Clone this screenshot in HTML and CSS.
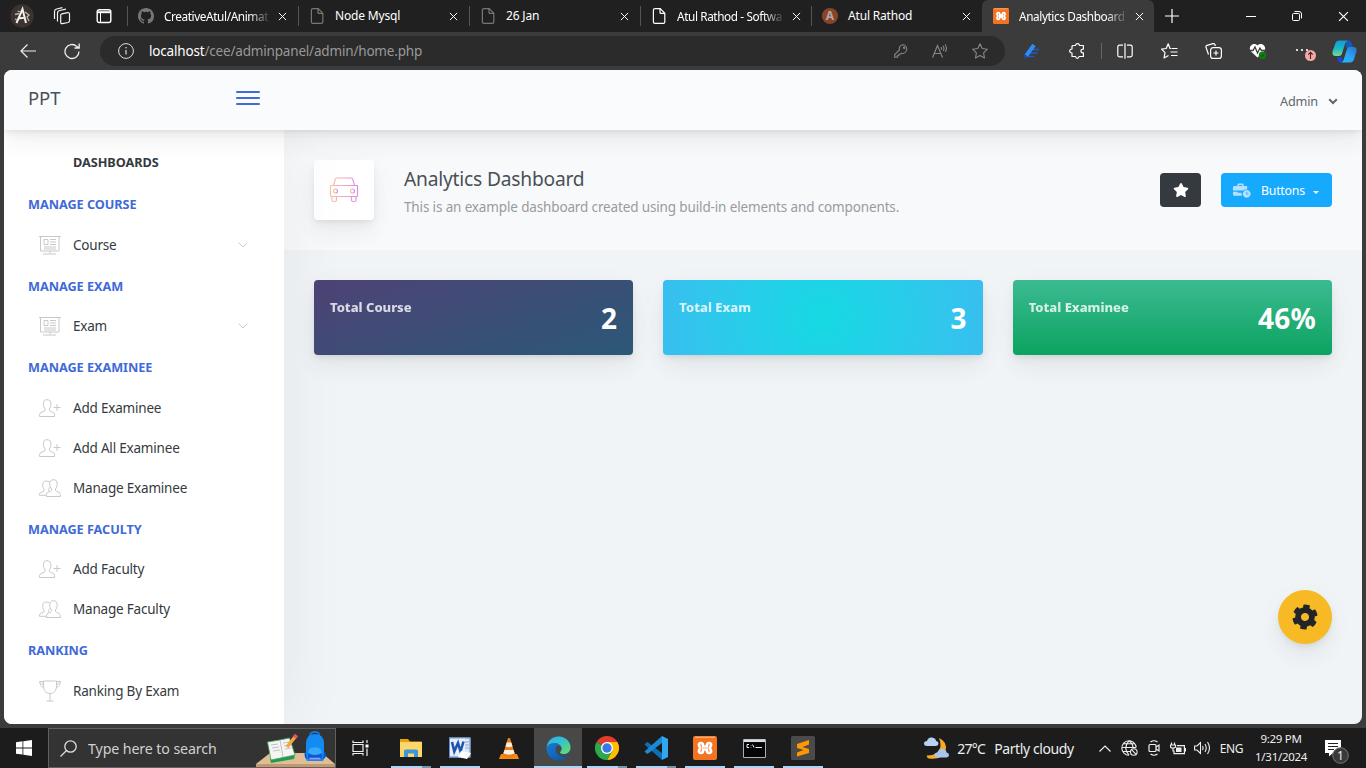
FILE: index.html
```
<!DOCTYPE html>
<html lang="en">
<head>
<meta charset="utf-8">
<title>Analytics Dashboard</title>
<link rel="stylesheet" href="styles.css">
</head>
<body>
<svg class="defs" width="0" height="0" aria-hidden="true">
  <defs>
    <linearGradient id="car-g" x1="0" x2="1" y1="0" y2="0"><stop offset="0" stop-color="#fbc2a5"/><stop offset=".55" stop-color="#f0a3c0"/><stop offset="1" stop-color="#d98bee"/></linearGradient>
    <linearGradient id="edge-a" x1="0" x2="1" y1="0" y2="1"><stop offset="0" stop-color="#2fb2dc"/><stop offset=".45" stop-color="#35c1cf"/><stop offset="1" stop-color="#6ce05a"/></linearGradient>
    <linearGradient id="edge-b" x1="0" x2="1" y1="0" y2="1"><stop offset="0" stop-color="#1b82dc"/><stop offset="1" stop-color="#0b4f9c"/></linearGradient>
    <linearGradient id="cop-a" x1="0" x2="0" y1="0" y2="1"><stop offset="0" stop-color="#129bd5"/><stop offset=".5" stop-color="#1bb6c4"/><stop offset="1" stop-color="#79dc8d"/></linearGradient>
    <linearGradient id="cop-b" x1="1" x2="0" y1="0" y2="1"><stop offset="0" stop-color="#2870cf"/><stop offset=".5" stop-color="#2da0f3"/><stop offset="1" stop-color="#16c5ef"/></linearGradient>
  </defs>
  <symbol id="i-close" viewBox="0 0 10 10"><path d="M1 1l8 8M9 1L1 9" fill="none" stroke="currentColor" stroke-width="1.1"/></symbol>
  <symbol id="i-file" viewBox="0 0 14 16"><path d="M3 .6h5.2l4.6 4.6V14q0 1.4-1.4 1.4H3Q1.4 15.400 1.400 14V2Q1.400.6 3 .6zM8 .8v3.600q0 1 1 1h3.700" fill="none" stroke="currentColor" stroke-width="1.200"/></symbol>
  <symbol id="i-board" viewBox="0 0 22 20"><path d="M0 1.500h22M1.500 1.500v14.500h18.500V1.500M11 16v2.500M4 19h13M5 4.500h4v5H5zM11 4.500h6M11 7h6M11 9.500h6M5 12h12M5 14h12" fill="none" stroke="currentColor"/></symbol>
  <symbol id="i-add" viewBox="0 0 22 18"><path d="M8 .7C5.500.7 4.400 2.200 4.400 5c0 2.200.8 3.900 1.700 4.800v1.700C5.500 13 .6 12.700.6 15.500v2h15v-2c0-2.800-4.600-2.500-5.200-4V9.800c.9-.9 1.500-2.600 1.500-4.800 0-2.800-1.400-4.300-3.900-4.300zM18 5v7M14.500 8.500H21.500" fill="none" stroke="currentColor"/></symbol>
  <symbol id="i-group" viewBox="0 0 22 18"><path d="M14.500.7c-2.500 0-3.800 1.500-3.800 4.300 0 2.200.8 3.900 1.700 4.800v1.700c-.6 1.500-5 1.200-5 4v2h14v-2c0-2.800-4.300-2.500-4.900-4V9.800c.9-.9 1.700-2.600 1.700-4.800 0-2.800-1.200-4.300-3.700-4.300zM10.500 3C9.700 2.500 8.500 2 7.200 2 4.700 2 3.700 3.500 3.700 6.200c0 2.200.6 3.200 1.400 4v1.600c-.7 1.300-4.600 1-4.600 3.300v1.200h6.500M10.500 8.500c-.3.900-.7 1.300-1 1.700v1.500l1.300.9" fill="none" stroke="currentColor"/></symbol>
  <symbol id="i-cup" viewBox="0 0 22 22"><path d="M4.500 1h13v4.500c0 5-2.500 8-6.500 8s-6.500-3-6.500-8zM4.500 1.500H.6c.3 3.500 2 5.200 4.200 6.300M17.500 1.500h3.900c-.3 3.500-2 5.200-4.200 6.300M2 2.500l2.500 3M20 2.500l-2.500 3M11 13.500V21M7.500 21h7" fill="none" stroke="currentColor"/></symbol>
  <symbol id="i-chev" viewBox="0 0 10 6"><path d="M.6.6L5 5 9.400.6" fill="none" stroke="currentColor"/></symbol>
  <symbol id="i-xampp" viewBox="0 0 24 24"><rect width="24" height="24" rx="2" fill="#f37321"/><path d="M2 1.300h20" stroke="#ffc08f"/><path d="M8 7c-1.800 0-2.400 1.300-1.900 2.600.4.900.9 1.400.9 2.400s-.5 1.500-.9 2.400C5.600 15.700 6.200 17 8 17c1.700 0 2-1 2-2.200V13.500h4v1.300c0 1.200.3 2.200 2 2.200 1.800 0 2.400-1.300 1.900-2.600-.4-.9-.9-1.400-.9-2.400s.5-1.500.9-2.400C18.400 8.300 17.800 7 16 7c-1.700 0-2 1-2 2.200v1.300h-4V9.200C10 8 9.700 7 8 7z" fill="none" stroke="#fff" stroke-width="2.700"/></symbol>
</svg>

<div class="tabstrip">
  <div class="lead">
    <svg class="avatar" width="24" height="24" viewBox="0 0 24 24"><circle cx="12" cy="12" r="11.700" fill="#3b3330"/><path d="M6.500 19L12.500 5l3.500 14M8.500 14.500l7-1" fill="none" stroke="#f2f0ea" stroke-width="2"/><path d="M5 10.500l4-1M15 8l4 3-2 2 2 4M7.500 7l3 1M5 15l2 1" fill="none" stroke="#bdb8b0" stroke-width="1.300"/></svg>
    <svg width="18" height="18" viewBox="0 0 18 18" fill="none" stroke="#f2f2f2" stroke-width="1.200"><path d="M8.800 6.800l6-1.200q1.700-.2 1.700 1.400v6.800q0 1.300-1.400 1.700l-5.600 1.200q-1.800.2-1.800-1.500V8.300q0-1.200 1.100-1.500z"/><path d="M4.500 14.500V6q0-2 2-2.500l6.500-1.300M1.500 12V4.500q0-2 2-2.500l6-1.300"/></svg>
    <svg width="16" height="16" viewBox="0 0 16 16"><rect x="1.200" y="1.700" width="13.600" height="12.800" rx="2" fill="none" stroke="#fff" stroke-width="1.400"/><path d="M1 4.200h14" stroke="#fff" stroke-width="2"/><path d="M4.500 5v9.500" stroke="#fff"/></svg>
  </div>
  <div class="tab"><svg class="fav" width="16" height="16" viewBox="0 0 16 16" fill="#777"><path d="M8 0C3.580 0 0 3.580 0 8c0 3.540 2.290 6.530 5.470 7.590.4.070.55-.17.55-.38v-1.490c-2.010.37-2.530-.49-2.690-.94-.09-.23-.48-.94-.82-1.130-.28-.15-.68-.52-.01-.53.63-.01 1.080.58 1.230.82.72 1.210 1.870.87 2.330.66.070-.52.28-.87.510-1.070-1.780-.2-3.640-.89-3.640-3.950 0-.87.310-1.590.82-2.150-.08-.2-.36-1.020.08-2.120 0 0 .67-.21 2.200.82a7.600 7.600 0 0 1 4 0c1.530-1.040 2.200-.82 2.200-.82.44 1.100.16 1.920.08 2.120.51.56.82 1.270.82 2.150 0 3.070-1.870 3.750-3.650 3.950.29.25.54.73.54 1.480v2.200c0 .21.15.46.55.38A8 8 0 0 0 16 8c0-4.420-3.580-8-8-8z"/></svg><span class="tab-title fade">CreativeAtul/Animat</span><svg class="x"><use href="#i-close"/></svg></div>
  <div class="tab"><svg class="fav dim" width="14" height="16"><use href="#i-file"/></svg><span class="tab-title">Node Mysql</span><svg class="x"><use href="#i-close"/></svg></div>
  <div class="tab"><svg class="fav dim" width="14" height="16"><use href="#i-file"/></svg><span class="tab-title">26 Jan</span><svg class="x"><use href="#i-close"/></svg></div>
  <div class="tab"><svg class="fav" width="14" height="16"><use href="#i-file"/></svg><span class="tab-title fade">Atul Rathod - Softwa</span><svg class="x"><use href="#i-close"/></svg></div>
  <div class="tab"><span class="fav disc">A</span><span class="tab-title">Atul Rathod</span><svg class="x"><use href="#i-close"/></svg></div>
  <div class="tab active"><svg class="fav" width="16" height="16"><use href="#i-xampp"/></svg><span class="tab-title fade">Analytics Dashboard</span><svg class="x"><use href="#i-close"/></svg></div>
  <svg class="plus" width="14" height="14" viewBox="0 0 14 14"><path d="M7 0v14M0 7h14" stroke="#fff" stroke-width="1.200"/></svg>
  <div class="win">
    <svg width="10" height="10" viewBox="0 0 10 10"><path d="M0 5.500h10" stroke="#fff"/></svg>
    <svg width="10" height="10" viewBox="0 0 10 10" fill="none" stroke="#fff"><rect x=".5" y="2.500" width="7" height="7" rx="1"/><path d="M2.500.5H7q2.500 0 2.500 2.500v4.500"/></svg>
    <svg width="11" height="11"><use href="#i-close"/></svg>
  </div>
</div>

<div class="toolbar">
  <svg class="back" width="16" height="14" viewBox="0 0 16 14" fill="none" stroke="#eee" stroke-width="1.200"><path d="M16 7H1M7.500.5L1 7l6.500 6.500"/></svg>
  <svg class="reload" width="16" height="17" viewBox="0 0 16 17" fill="none" stroke="#eee" stroke-width="1.300"><path d="M15 8.500a7 7 0 1 1-2.200-5.100L15 5M15.200.5V5h-4.700"/></svg>
  <div class="omnibox">
    <svg width="16" height="16" viewBox="0 0 16 16"><circle cx="8" cy="8" r="7.400" fill="none" stroke="#ddd"/><path d="M8 7v4.500" stroke="#ddd" stroke-width="1.200"/><circle cx="8" cy="4.800" r=".8" fill="#ddd"/></svg>
    <div class="url"><b>localhost</b>/cee/adminpanel/admin/home.php</div>
    <svg width="14" height="14" viewBox="0 0 14 14" fill="none" stroke="#888" stroke-width="1.100"><path d="M9.300.7a4 4 0 0 0-3.900 5.100L.7 10.500v2.800h2.600v-1.500h1.500v-1.500h1.500l1-1A4.100 4.100 0 1 0 9.300.7z"/><circle cx="10.200" cy="3.800" r=".7"/></svg>
    <svg width="16" height="14" viewBox="0 0 16 14" fill="none" stroke="#888" stroke-width="1.100"><path d="M.6 13.500L5.500 1.500l5 12M2.300 9.500h6.400M9 3q1 1.300.2 2.800M11 1.800q1.800 2.500.3 5.200M13 .5q2.800 3.500.3 7.300"/></svg>
    <svg width="16" height="16" viewBox="0 0 16 16" fill="none" stroke="#888" stroke-width="1.100" stroke-linejoin="round"><path d="M8 .8l2.200 4.700 5.200.7-3.800 3.600.9 5.200L8 12.500 3.500 15l.9-5.200L.6 6.200l5.200-.7z"/></svg>
  </div>
  <div class="tools">
    <svg width="18" height="16" viewBox="0 0 18 16"><path d="M9 6.500h7M7 10h7.500M5 13.500h6" stroke="#2458c5" stroke-width="1.700"/><path d="M3 13L11 2" stroke="#2f8cf0" stroke-width="4"/><path d="M1.500 15L3.500 12.500" stroke="#174ca8" stroke-width="3"/></svg>
    <svg class="g28" width="16" height="16" viewBox="0 0 16 16" fill="none" stroke="#fff" stroke-width="1.200" stroke-linejoin="round"><path d="M4.500 2.500h2q.3-1.900 2-1.900t2 1.900h3.900v3.600q-2.500 0-2.500 1.900t2.500 1.900v3.600H10q-.3 1.800-1.700 1.800t-1.700-1.800H3V10Q.7 9.800.7 8T3 6V3.500q0-1 1.500-1z"/></svg>
    <i class="vline"></i>
    <svg width="16" height="16" viewBox="0 0 16 16" fill="none" stroke="#fff" stroke-width="1.200"><path d="M6 2.200H2.500Q.8 2.200.8 4v8q0 1.800 1.700 1.800H6M10 2.200h3.500q1.700 0 1.700 1.800v8q0 1.800-1.700 1.800H10M8 .3v15.500"/></svg>
    <svg class="g28" width="17" height="16" viewBox="0 0 17 16" fill="none" stroke="#fff" stroke-width="1.200" stroke-linejoin="round"><path d="M10 5.500H9L7.200.8 5.200 5.500.6 6.200l3.400 3.400-1 5.400 4.500-2.500M10.500 5.500h6M9.500 9h7M10 12.500h6.500"/></svg>
    <svg class="g27" width="17" height="16" viewBox="0 0 17 16" fill="none" stroke="#fff" stroke-width="1.200"><rect x="5.600" y="4.600" width="10.800" height="10.800" rx="2.500"/><path d="M11 7.500v5M8.500 10h5M3.500 11.500L1 4.300q-.4-1.500 1-2L8 .7q1.500-.3 2 1l.4 1.300"/></svg>
    <svg class="g27" width="18" height="16" viewBox="0 0 18 16"><path d="M8.500 14.500L1.500 8C-1 4 4-1.500 8.500 2.500 13-1.500 18 4 15.500 8z" fill="#fff"/><path d="M0 7.500h4L6 4l2.500 6L11 5l1.500 2.500H17" fill="none" stroke="#3b3b3b" stroke-width="1.300"/><circle cx="13.500" cy="12.300" r="3.700" fill="#107c10"/><path d="M12 12.500l1 1 2-2" fill="none" stroke="#064b06"/></svg>
    <svg class="g27" width="22" height="20" viewBox="0 0 22 20"><g fill="#fff"><circle cx="3" cy="9" r="1.100"/><circle cx="8" cy="9" r="1.100"/><circle cx="13" cy="9" r="1.100"/></g><circle cx="16.500" cy="14.500" r="5.500" fill="#f4a9a5"/><path d="M16.500 18v-6.500M14.300 13.600l2.200-2.200 2.200 2.200" fill="none" stroke="#4a2020" stroke-width="1.100"/></svg>
    <svg class="g16" width="25" height="23" viewBox="0 0 25 23"><path d="M14 .5h2.500q2.500 0 3.200 2.500l1.300 4-7 1z" fill="#1459b5"/><path d="M5 17h4l3 5.500H8.500Q6.500 22.500 5.700 20z" fill="#1b47d8"/><path d="M7 .5h9q-2 .5-2.800 3L9.800 14q-.8 2-2.800 2H3.500Q-.5 16 .7 11L3.300 3.500Q4.300.5 7 .5z" fill="url(#cop-a)"/><path d="M18 22.500H9q2-.5 2.800-3L15 9q.8-2 2.800-2h4q3.700.3 2.600 4.500L22 19.500q-1.200 3-4 3z" fill="url(#cop-b)"/></svg>
  </div>
</div>

<div class="page">
  <header class="head">
    <div class="brand">PPT</div>
    <div class="burger"><i></i><i></i><i></i></div>
    <div class="user">Admin <svg width="10" height="7" viewBox="0 0 10 7"><path d="M1.200 1.200L5 5 8.800 1.200" fill="none" stroke="#60666c" stroke-width="2"/></svg></div>
  </header>
  <div class="cols">
    <nav class="side">
      <h5 class="top">DASHBOARDS</h5>
      <h5>MANAGE COURSE</h5>
      <a><svg width="22" height="20"><use href="#i-board"/></svg><span>Course</span><svg class="chev" width="10" height="6"><use href="#i-chev"/></svg></a>
      <h5>MANAGE EXAM</h5>
      <a><svg width="22" height="20"><use href="#i-board"/></svg><span>Exam</span><svg class="chev" width="10" height="6"><use href="#i-chev"/></svg></a>
      <h5>MANAGE EXAMINEE</h5>
      <a><svg width="22" height="18"><use href="#i-add"/></svg><span>Add Examinee</span></a>
      <a><svg width="22" height="18"><use href="#i-add"/></svg><span>Add All Examinee</span></a>
      <a><svg width="22" height="18"><use href="#i-group"/></svg><span>Manage Examinee</span></a>
      <h5>MANAGE FACULTY</h5>
      <a><svg width="22" height="18"><use href="#i-add"/></svg><span>Add Faculty</span></a>
      <a><svg width="22" height="18"><use href="#i-group"/></svg><span>Manage Faculty</span></a>
      <h5>RANKING</h5>
      <a><svg width="22" height="22"><use href="#i-cup"/></svg><span>Ranking By Exam</span></a>
    </nav>
    <main class="main">
      <section class="title">
        <div class="title-icon"><svg width="30" height="26" viewBox="0 0 30 26" fill="none" stroke="url(#car-g)" stroke-width="1.200"><path d="M4.500 8.500l1.800-6.300Q6.700 1 8 1h14q1.300 0 1.700 1.200l1.800 6.300M1 8.500h28M1.500 8.500v10q0 1 1 1h25q1 0 1-1v-10M1.500 19.500h27M3 20v3q0 1.500 1.500 1.500h1.500q1.500 0 1.500-1.500v-3M22.500 20v3q0 1.500 1.500 1.500h1.500q1.500 0 1.500-1.500v-3"/><circle cx="6.500" cy="14" r="2"/><circle cx="23.500" cy="14" r="2"/></svg></div>
        <div class="title-text"><div class="t1">Analytics Dashboard</div><div class="t2">This is an example dashboard created using build-in elements and components.</div></div>
        <div class="btn star"><svg width="16" height="14" viewBox="0 0 576 512" fill="#fff"><path d="M259.300 17.800L194 150.200 47.900 171.500c-26.200 3.800-36.700 36.100-17.700 54.600l105.700 103-25 145.500c-4.500 26.300 23.200 46 46.400 33.700L288 439.600l130.700 68.700c23.200 12.200 50.900-7.400 46.400-33.700l-25-145.500 105.700-103c19-18.500 8.500-50.800-17.700-54.600L382 150.200 316.700 17.800c-11.700-23.600-45.600-23.900-57.400 0z"/></svg></div>
        <div class="btn drop"><svg width="18" height="15" viewBox="0 0 18 15" fill="#b5e1ff"><path d="M4.500 3V1.500Q4.500.5 5.500.5h4q1 0 1 1V3h2.700q1 0 1 1v2.500h-1.500q-1.500.2-2.500 1H0V4.200Q0 3 1.200 3zM6 3h3V2H6zM0 8.800h4.800v1h3.800q-.2 1.700.4 3H1.200Q0 12.800 0 11.600z"/><path fill-rule="evenodd" d="M13.700 7a3.900 3.900 0 1 0 .01 0zm-.3 1.800h.8v2h1.300v.8h-2.100z"/></svg><span>Buttons</span><i class="caret"></i></div>
      </section>
      <section class="cards">
        <div class="card c1"><span>Total Course</span><b>2</b></div>
        <div class="card c2"><span>Total Exam</span><b>3</b></div>
        <div class="card c3"><span>Total Examinee</span><b>46%</b></div>
      </section>
    </main>
  </div>
  <div class="fab"><svg width="26" height="26" viewBox="0 0 512 512" fill="#212529" transform="rotate(8)"><path d="M487.400 315.700l-42.600-24.600c4.300-23.200 4.300-47 0-70.200l42.600-24.600c4.900-2.800 7.100-8.600 5.500-14-11.100-35.600-30-67.800-54.700-94.600-3.800-4.100-10-5.100-14.800-2.300L380.800 110c-17.900-15.400-38.500-27.300-60.800-35.100V25.800c0-5.600-3.900-10.500-9.400-11.700-36.700-8.200-74.300-7.800-109.200 0-5.500 1.200-9.400 6.100-9.400 11.700V75c-22.200 7.900-42.800 19.800-60.800 35.100L88.700 85.500c-4.900-2.800-11-1.900-14.800 2.300-24.700 26.700-43.600 58.900-54.700 94.600-1.700 5.400.6 11.200 5.500 14L67.300 221c-4.300 23.200-4.300 47 0 70.200l-42.600 24.600c-4.900 2.800-7.100 8.600-5.500 14 11.100 35.600 30 67.800 54.700 94.600 3.800 4.100 10 5.100 14.800 2.300l42.600-24.600c17.900 15.400 38.500 27.300 60.800 35.100v49.200c0 5.600 3.900 10.500 9.400 11.700 36.700 8.200 74.300 7.800 109.200 0 5.500-1.200 9.400-6.100 9.400-11.700v-49.200c22.200-7.900 42.800-19.800 60.800-35.100l42.600 24.600c4.900 2.800 11 1.900 14.800-2.300 24.700-26.700 43.600-58.900 54.700-94.600 1.500-5.500-.7-11.300-5.600-14.100zM256 336c-44.100 0-80-35.900-80-80s35.900-80 80-80 80 35.900 80 80-35.900 80-80 80z"/></svg></div>
</div>

<footer class="taskbar">
  <div class="start"><svg width="16" height="16" viewBox="0 0 16 16" fill="#fff"><path d="M0 2.200l6.500-.9v6.200H0zM7.300 1.200L16 0v7.500H7.300zM0 8.400h6.500v6.200L0 13.700zM7.300 8.400H16V16l-8.700-1.200z"/></svg></div>
  <div class="search">
    <svg width="17" height="17" viewBox="0 0 17 17" fill="none" stroke="#ddd" stroke-width="1.300"><circle cx="10.500" cy="6.500" r="5.700"/><path d="M6.500 10.500L.5 16.500"/></svg>
    <span>Type here to search</span>
    <svg class="art" width="79" height="38" viewBox="0 0 79 38"><path d="M0 38v-3L14 24h52l13 11v3z" fill="#e0bd95"/><path d="M0 35h79v3H0z" fill="#c3986f"/><path d="M14 30l25-4-1 4-23 4z" fill="#219b53"/><path d="M11.500 13l12-2 10-2 5.500 17-24 5z" fill="#f7f5f1" stroke="#3aa65c" stroke-width=".8"/><path d="M24 11l3 17M15 16l7-1M16 19l7-1M17 22l7-1M27 14l6-1M28 17l6-1M29 20l6-1" stroke="#b4bac4" stroke-width=".9"/><path d="M31 18l8-10" stroke="#f5a53a" stroke-width="3.500"/><path d="M38.500 8.500l2-2.500" stroke="#e8506e" stroke-width="4"/><path d="M54 7q0-4 5-4t4 4" fill="none" stroke="#1673d8" stroke-width="2"/><path d="M50 15Q50 5 59 5t9 10v15q0 2-2 2H52q-2 0-2-2z" fill="#128cf4"/><path d="M50 23q-1.500 0-1.500 3t2.500 4M68 23q2 0 2 3t-3 4" fill="#0b56c4"/><path d="M52 24q0-6 7-6t7 6v6H52z" fill="#0a5bd0"/><path d="M52 24q0-6 7-6t7 6q-7 4-14 0z" fill="#37a8ff"/><path d="M53.500 29.500h11" stroke="#b68cff" stroke-width="1.500"/></svg>
  </div>
  <div class="apps">
    <div class="app first"><svg width="17" height="16" viewBox="0 0 17 16" fill="none" stroke="#eee" stroke-width="1.200"><path d="M1 4.500h10v7H1zM1 .5v2h10v-2M1 15.500v-2h10v2M15 0v3M15 8.500V16"/><path d="M13.500 4.500h3v3h-3z" fill="#fff" stroke="none"/></svg></div>
    <div class="app run two"><svg width="22" height="20" viewBox="0 0 22 20"><path d="M0 1h8l2 2.500h11.500V19H0z" fill="#e5a50a"/><path d="M0 4h22v15H0z" fill="#ffd768"/><path d="M4 19v-6q0-1.500 1.500-1.500h11Q18 11.500 18 13v6h-4v-3.500H8V19z" fill="#3a97da"/></svg></div>
    <div class="app run"><svg width="22" height="22" viewBox="0 0 22 22"><path d="M0 .5h21.500v20H0z" fill="#dce7f6"/><path d="M.5 1h20.500v19H.5z" fill="none" stroke="#5f8fce"/><path d="M16 5h4M16 8h4M16 11h4" stroke="#8fa9d0"/><path d="M1 2.500l15-1v15l-15 2z" fill="#e8f0fb"/><path d="M3 5l2.300 9.500L9 6l2.500 8.500L14.500 4.500" fill="none" stroke="#1f55ae" stroke-width="2.600"/><path d="M12 14l10 2-4 6-9-2z" fill="#fff"/></svg></div>
    <div class="app"><svg width="20" height="23" viewBox="0 0 20 23"><path d="M2 17h16l2 5H0z" fill="#f48b10"/><path d="M9 1h2l5.500 18q-6.500 3-13 0z" fill="#ef7f0c"/><path d="M7.700 5.500h4.600l1.200 4q-3.500 1.300-7 0zM5.500 13h9l1.200 3.500q-5.700 2.300-11.400 0z" fill="#f3efe9"/></svg></div>
    <div class="app run on"><svg width="25" height="25" viewBox="0 0 25 25"><circle cx="12.500" cy="12.500" r="12" fill="url(#edge-b)"/><path d="M.8 11C2 4 7 .5 12.500.5c7 0 12 5 12 11 0 4-3 6.500-6.500 6.500-2.500 0-4-.8-4-1.800 0-.8 1.500-1.500 1.500-3.700C15.500 9 12 7 8.500 7 5 7 2 8.500.8 11z" fill="url(#edge-a)"/><path d="M9.500 12.500q.5-3.500 4-3 2 .8 2 3 0 2-1.500 3.700-.3 1 1 1.800 4.500 1.500 9-1.500-1.500 3-3.500 4.500-4 .5-7-1.500-4-3-4-7z" fill="#474747"/></svg></div>
    <div class="app run two"><svg width="24" height="24" viewBox="0 0 24 24"><path d="M12 12L1.600 6A12 12 0 0 1 22.400 6z" fill="#e33b2e"/><path d="M12 12L1.600 6A12 12 0 0 0 12 24z" fill="#2da94f"/><path d="M12 24l5.200-9L12 6h10.400A12 12 0 0 1 12 24z" fill="#fdbd00"/><path d="M6.800 15L12 24l5.200-9z" fill="#2da94f"/><circle cx="12" cy="12" r="6" fill="#fff"/><circle cx="12" cy="12" r="4.700" fill="#3b78e7"/></svg></div>
    <div class="app run two"><svg width="24" height="24" viewBox="0 0 24 24"><path d="M2 7L.5 8.500 18 24l.5-6.500L3.500 6z" fill="#0f6fb5"/><path d="M2 17L.5 15.500 18 0l.5 6.500L3.500 18z" fill="#1a8ad4"/><path d="M18 0l6 3v18l-6 3z" fill="#2fa8f2"/></svg></div>
    <div class="app run"><svg width="24" height="24"><use href="#i-xampp"/></svg></div>
    <div class="app run"><svg width="23" height="19" viewBox="0 0 23 19"><path d="M.5.5h22v18H.5z" fill="#050505" stroke="#a9b0b5"/><path d="M1 1.800h21" stroke="#d9e0e5" stroke-width="2.500"/><path d="M6 5.500H4v3h2M8 6v.5M8 8v.5M9.500 5.500l1.500 3M12.500 8.500H19" fill="none" stroke="#eee"/></svg></div>
    <div class="app run"><svg width="24" height="24" viewBox="0 0 24 24"><rect width="24" height="24" rx="1.500" fill="#4a4a4a"/><path d="M6 8l12-4v4.500L11.500 11 18 13v4L6 20.500V16.500L12.500 14 6 12z" fill="#ff9800"/></svg></div>
  </div>
  <div class="tray">
    <svg class="wx" width="25" height="23" viewBox="0 0 25 23"><path d="M15 1Q24 5 21.500 14T5 21.500Q3 21 2.500 18.500 14 19 16.500 10 17 5 15 1z" fill="#f7a928"/><path d="M3 9q-3 0-3-2.500T3 4q1-4 5-3.500T12 4q2.500.3 2.500 2.500T12 9z" fill="#b7d0f4"/><path d="M13.500 20.500q-3 0-3-2.500t3-2.500q1-4 5-3.500t4 3.500q2.500.3 2.500 2.500t-2.500 2.500z" fill="#a8c5f0"/></svg>
    <span class="deg">27°C</span><span class="wtext">Partly cloudy</span>
    <svg class="up" width="12" height="7" viewBox="0 0 12 7"><path d="M.5 6.500L6 1l5.500 5.500" fill="none" stroke="#eee" stroke-width="1.200"/></svg>
    <svg class="globe" width="17" height="16" viewBox="0 0 17 16" fill="none" stroke="#eee" stroke-width="1.100"><path d="M8 15.200A7.200 7.200 0 1 1 15.200 7.500M.8 7.500h14M2 3.800h12M2 11.500h7M8 .8Q1.500 7.500 8 15M8 .8q4 3 4 7"/><circle cx="12.800" cy="12" r="3.300"/><path d="M10.500 9.700l4.600 4.600"/></svg>
    <svg class="meet" width="12" height="16" viewBox="0 0 12 16" fill="none" stroke="#eee" stroke-width="1.200"><rect x="1" y="4.500" width="7" height="7" rx="1"/><path d="M8 7l3-2v6L8 9M2.500 2Q6-.5 9.500 2M2.500 14Q6 16.500 9.500 14"/></svg>
    <svg class="bat" width="16" height="13" viewBox="0 0 16 13" fill="none" stroke="#eee" stroke-width="1.200"><path d="M7 3.600h7.400v8H4v-3M15.500 6v3.500M1.500.5v2.500M4.500.5v2.500M.5 3h5v1.500Q5.500 6 3 6T.5 4.500zM3 6v3.500"/><path d="M6 5.500h5.500V10H6z" fill="#eee" stroke="none"/></svg>
    <svg class="vol" width="17" height="14" viewBox="0 0 17 14" fill="none" stroke="#eee" stroke-width="1.100"><path d="M.6 5v4H3l3.500 3.500v-11L3 5zM8.500 5q1.200 2 0 4M11 3q2.400 4 0 8M13.500 1q4 6 0 12"/></svg>
    <span class="eng">ENG</span>
    <div class="clock"><span>9:29 PM</span><span class="date">1/31/2024</span></div>
    <div class="note"><svg width="25" height="24" viewBox="0 0 25 24"><path d="M0 0h16v13H8l-4 3.500V13H0z" fill="#fff"/><path d="M3 3.500h10M3 6.500h10M3 9.500h6" stroke="#222"/><circle cx="15.500" cy="15.500" r="7.800" fill="#393939" stroke="#777"/></svg><span>1</span></div>
  </div>
</footer>
</body>
</html>
```

FILE: styles.css
```
* { box-sizing: border-box; }
body { margin: 0; width: 1366px; height: 768px; overflow: hidden; display: flex; flex-direction: column; background: #3b3b3b; font-family: "Noto Sans", "Open Sans", sans-serif; white-space: nowrap; }
.defs { position: absolute; }
svg { display: block; flex: none; }

/* browser tabs */
.tabstrip { display: flex; height: 32px; background: #202020; color: #fff; align-items: center; }
.lead { width: 127px; display: flex; align-items: center; padding-left: 10px; gap: 19px; }
.lead svg + svg + svg { margin-left: 6px; }
.tab { width: 171px; height: 32px; display: flex; align-items: center; padding-left: 10px; background: linear-gradient(#555, #555) 0 6px / 1px 20px no-repeat; }
.tab.active { width: 172px; background: #3b3b3b; border-radius: 6px 6px 0 0; }
.fav { width: 18px; margin-right: 9px; }
.dim { color: #777; }
.disc { width: 16px; height: 16px; margin: 0 10px 0 1px; border-radius: 50%; background: #8b4328; color: #aaa; font: bold 12px/16px "Noto Sans", sans-serif; text-align: center; }
.tab-title { flex: 1; font-size: 12px; line-height: 18px; letter-spacing: -0.18px; }
.tab-title.fade { font-size: 11.800px; letter-spacing: -0.4px; -webkit-mask-image: linear-gradient(90deg, #000 82%, rgba(0,0,0,.15)); mask-image: linear-gradient(90deg, #000 82%, rgba(0,0,0,.15)); }
.x { width: 9px; height: 9px; margin: 0 11px 0 10px; }
.plus { margin-left: 11px; }
.win { margin-left: auto; padding-right: 17px; display: flex; gap: 36px; align-items: center; }

/* address bar */
.toolbar { height: 38px; display: flex; align-items: center; padding-left: 20px; }
.reload { margin-left: 28px; }
.omnibox { width: 905px; height: 30px; margin-left: 20px; border-radius: 15px; background: #2b2b2b; display: flex; align-items: center; padding: 0 17px 0 18px; gap: 24px; }
.url { flex: 1; margin-left: -9px; font-size: 13.500px; letter-spacing: -.18px; color: #999; }
.url b { color: #fff; font-weight: 400; }
.tools { flex: 1; display: flex; align-items: center; padding-left: 18px; }
.g28 { margin-left: 28px; }
.g27 { margin-left: 27px; }
.g16 { margin-left: 16px; }
.vline { width: 1px; height: 16px; margin: 0 15px 0 16px; background: #666; }

/* application shell */
.page { position: relative; height: 654px; margin: 0 4px; border-radius: 8px; overflow: hidden; background: #f1f4f6; color: #495057; display: flex; flex-direction: column; }
.head { position: relative; z-index: 3; height: 60px; background: #fafbfc; display: flex; align-items: center; padding: 0 24px; box-shadow: 0 7.500px 35px rgba(4,9,20,.03), 0 15px 22px rgba(4,9,20,.03), 0 4px 8px rgba(4,9,20,.05), 0 2px 3px rgba(4,9,20,.03); }
.brand { width: 208px; margin-top: -6px; font-size: 18.500px; letter-spacing: -.1px; }
.burger { display: grid; gap: 4px; margin-top: -4px; }
.burger i { width: 24px; height: 2px; border-radius: 1px; background: #3f6ad8; }
.user { margin-left: auto; margin-top: 2px; display: flex; align-items: center; gap: 10px; font-size: 12.700px; letter-spacing: -.2px; color: #60666c; }
.cols { flex: 1; display: flex; }
.side { position: relative; z-index: 2; width: 280px; padding: 12.400px 24px 0; background: #fff; box-shadow: 7px 0 60px rgba(0,0,0,.05); }
.side h5 { height: 41.600px; margin: 0; line-height: 41.600px; font-size: 12.700px; font-weight: 700; letter-spacing: -.04px; color: #3f6ad8; }
.side h5.top { padding-left: 45px; color: #343a40; }
.side a { display: flex; align-items: center; height: 40px; padding: 0 12px 2px 11px; font-size: 13.500px; letter-spacing: -.2px; color: #343a40; }
.side a svg { color: #c6c8ca; margin-right: 12px; }
.side a .chev { margin: 0 0 0 auto; }
.main { flex: 1; }
.title { height: 120px; padding: 30px; background: #f8f9fb; display: flex; align-items: center; }
.title-icon { width: 60px; height: 60px; background: #fff; border-radius: 4px; display: grid; place-items: center; margin-right: 30px; }
.title-icon, .card, .fab { box-shadow: 0 7.500px 35px rgba(4,9,20,.03), 0 15px 22px rgba(4,9,20,.03), 0 4px 9px rgba(4,9,20,.05), 0 2px 3px rgba(4,9,20,.03); }
.title-text { flex: 1; }
.t1 { font-size: 19.200px; line-height: 28px; letter-spacing: -.2px; color: #495057; margin-top: 4px; }
.t2 { font-size: 13.500px; line-height: 24px; margin-top: 2px; letter-spacing: -.14px; color: #999b9e; }
.btn { height: 34px; border-radius: 4px; display: flex; align-items: center; }
.star { width: 41px; background: #343a40; justify-content: center; margin-right: 20px; }
.drop { width: 111px; background: #16aaff; color: #fff; font-size: 12.300px; letter-spacing: -.22px; padding: 0 13px 0 12px; }
.drop span { margin-left: 10px; flex: 1; }
.caret { border: 3px solid transparent; border-top-color: #fff; border-bottom: 0; margin-top: 4px; }
.cards { display: grid; grid-template-columns: repeat(3, 1fr); gap: 30px; padding: 30px; }
.card { height: 75px; border-radius: 4px; padding: 16px; display: flex; justify-content: space-between; align-items: flex-start; color: #fff; }
.card span { font-size: 13px; line-height: 22px; font-weight: 800; opacity: .8; letter-spacing: 0; }
.card b { align-self: center; font-size: 28px; line-height: 36px; letter-spacing: .2px; }
.c1 { background: linear-gradient(-20deg, #2b5876 0%, #4e4376 100%); }
.c2 { background: radial-gradient(circle 248px at center, #16d9e3 0%, #30c7ec 47%, #46aef7 100%); }
.c3 { background: linear-gradient(to top, #0ba360 0%, #3cba92 100%); }
.fab { position: absolute; right: 30px; bottom: 80px; width: 54px; height: 54px; border-radius: 50%; background: #f7b924; display: grid; place-items: center; }

/* desktop taskbar */
.taskbar { height: 40px; margin-top: 4px; background: #1c1c1c; color: #eee; display: flex; align-items: center; }
.start { width: 48px; display: grid; place-items: center; }
.search { position: relative; width: 288px; height: 40px; border: 1px solid #606060; background: #333; display: flex; align-items: center; padding-left: 11px; font-size: 14.200px; letter-spacing: -.1px; color: #d0d0d0; }
.search span { margin-left: 11px; }
.art { position: absolute; right: 0; bottom: 0; }
.apps { display: flex; gap: 1px; }
.app { position: relative; width: 48px; height: 40px; display: grid; place-items: center; }
.app.first { margin-right: 2px; }
.app.run::after { content: ""; position: absolute; left: 4px; right: 4px; bottom: 0; height: 2px; background: #a9d5f8; }
.app.two::after { background: linear-gradient(90deg, #a9d5f8 31px, #7795ab 31px); }
.app.on { background: #484848; }
.app.on::after { left: 0; right: 0; }
.tray { flex: 1; display: flex; align-items: center; justify-content: flex-end; padding-right: 16px; }
.deg { font-size: 14px; margin-left: 8px; letter-spacing: -.7px; }
.wtext { font-size: 14px; margin-left: 9px; letter-spacing: -.4px; }
.up { margin-left: 25px; }
.globe { margin-left: 10px; }
.meet { margin-left: 10px; }
.bat { margin-left: 10px; }
.vol { margin-left: 8px; }
.eng { margin-left: 9px; font-size: 12px; letter-spacing: -.4px; }
.clock { margin-left: 12px; display: grid; justify-items: center; font-size: 11.500px; line-height: 18px; letter-spacing: -.3px; }
.note { position: relative; margin-left: 18px; margin-top: 8px; }
.note span { position: absolute; left: 12px; top: 7px; font-size: 12px; line-height: 17px; }
```
